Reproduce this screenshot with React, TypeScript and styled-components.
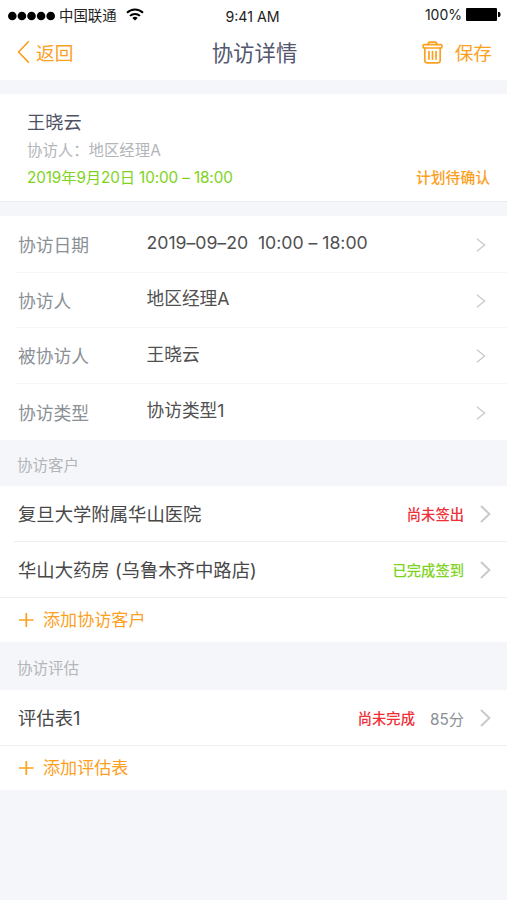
import React from "react";
import styled, { createGlobalStyle } from "styled-components";

const GlobalStyle = createGlobalStyle`
  * { box-sizing: border-box; }
  body {
    margin: 0;
    background: #f4f6fa;
    font-family: Inter, "Noto Sans CJK SC", sans-serif;
  }
`;

const ORANGE = "#fba01f";
const RED = "#ee2f38";
const GREEN = "#7ed321";

const Screen = styled.main`
  width: 507px;
  height: 900px;
  overflow: hidden;
  background: #f4f6fa;
  white-space: pre;
`;

const StatusBar = styled.div`
  height: 30px;
  display: grid;
  grid-template-columns: 1fr auto 1fr;
  align-items: center;
  padding: 0 6px 0 8px;
  background: #fff;
  color: #222;
`;

const Carrier = styled.div`
  display: flex;
  align-items: center;
  font-size: 14.4px;
  line-height: 28px;
  padding-top: 1px;
  svg:first-child { margin-right: 4px; }
  svg:last-child { margin: 0 0 3px 9px; }
`;

const Clock = styled.div`
  font-size: 14.2px;
  line-height: 20px;
  padding: 3px 4px 0 0;
`;

const Battery = styled.div`
  display: flex;
  justify-content: flex-end;
  align-items: center;
  gap: 4px;
  font-size: 14px;
  line-height: 28px;
  padding-bottom: 1px;
`;

const NavBar = styled.header`
  height: 50px;
  display: grid;
  grid-template-columns: 1fr auto 1fr;
  align-items: center;
  padding: 0 15px 6px 17px;
  background: #fff;
`;

const NavAction = styled.div<{ $end?: boolean }>`
  display: flex;
  align-items: center;
  justify-content: ${(p) => (p.$end ? "flex-end" : "flex-start")};
  gap: ${(p) => (p.$end ? "12px" : "6px")};
  color: ${ORANGE};
  font-size: 18.7px;
  line-height: 40px;
  span { padding-top: 3px; }
`;

const Title = styled.h1`
  margin: 0;
  font-size: 21.4px;
  line-height: 42px;
  padding-top: 1px;
  font-weight: 400;
  color: #535670;
`;

const Summary = styled.section`
  height: 108px;
  margin: 14px 0;
  padding: 14px 17px 0 27px;
  background: #fff;
  border-bottom: 1px solid #ebecef;
`;

const PersonName = styled.div`
  font-size: 18.2px;
  line-height: 28px;
  color: #4e5264;
`;

const Visitor = styled.div`
  font-size: 15.4px;
  line-height: 28px;
  padding-top: 1px;
  color: #b3b5b9;
`;

const SummaryFooter = styled.div`
  display: flex;
  justify-content: space-between;
  align-items: center;
  line-height: 26px;
`;

const Schedule = styled.span`
  font-size: 15.3px;
  letter-spacing: -0.12px;
  color: ${GREEN};
`;

const Status = styled.span<{ $color: string; $size?: number }>`
  font-size: ${(p) => p.$size ?? 14.3}px;
  font-weight: 500;
  color: ${(p) => p.$color};
`;

const List = styled.section`
  background: #fff;
`;

const Field = styled.div<{ $height: number; $last?: boolean }>`
  height: ${(p) => p.$height}px;
  margin-left: 15px;
  padding: 2px 21px 0 3px;
  display: grid;
  grid-template-columns: 128.5px 1fr auto;
  align-items: center;
  border-bottom: ${(p) => (p.$last ? "0" : "1px solid #f4f5f6")};
  svg { margin-bottom: 1px; }
`;

const FieldLabel = styled.span`
  font-size: 17.8px;
  line-height: 28px;
  padding-top: 1px;
  color: #8b9096;
`;

const FieldValue = styled.span<{ $spacing?: number }>`
  font-size: 17.7px;
  line-height: 28px;
  letter-spacing: ${(p) => p.$spacing ?? 0}px;
  padding-bottom: 4px;
  color: #505050;
`;

const SectionHeading = styled.h2<{ $height: number }>`
  margin: 0;
  height: ${(p) => p.$height}px;
  padding: 1px 17px 0;
  display: flex;
  align-items: center;
  font-size: 15.5px;
  font-weight: 400;
  color: #b3b5b9;
`;

const Entry = styled.div<{ $inset?: boolean }>`
  height: 56px;
  margin-left: ${(p) => (p.$inset ? 14 : 0)}px;
  padding: 0 16px 0 ${(p) => (p.$inset ? 4 : 18)}px;
  display: flex;
  align-items: center;
  border-bottom: 1px solid #eeeff1;
`;

const EntryName = styled.span`
  flex: 1;
  font-size: 18.35px;
  line-height: 28px;
  color: #484848;
`;

const Score = styled.span`
  margin-left: 15px;
  font-size: 15.3px;
  color: #8b9096;
`;

const EntryArrow = styled.span`
  display: flex;
  margin-left: 16px;
`;

const AddButton = styled.div`
  height: 44px;
  padding: 0 19px 1px;
  display: flex;
  align-items: center;
  gap: 9px;
  font-size: 17.1px;
  color: ${ORANGE};
  span { padding-bottom: 2px; }
`;

const SignalDots = () => (
  <svg width="47" height="10" viewBox="0 0 47 10" fill="#000">
    {[4.3, 13.9, 23.5, 33.1, 42.7].map((x) => (
      <circle key={x} cx={x} cy="5" r="4.3" />
    ))}
  </svg>
);

const WifiIcon = () => (
  <svg width="18" height="13" viewBox="0 0 18 13" fill="none" stroke="#000" strokeWidth="2">
    <path d="M1 4.7a11.5 11.5 0 0 1 16 0M4 7.9a7.2 7.2 0 0 1 10 0" />
    <path d="M9 12.6 6.3 10a4 4 0 0 1 5.4 0z" fill="#000" stroke="none" />
  </svg>
);

const BatteryIcon = () => (
  <svg width="35" height="13" viewBox="0 0 35 13" fill="#000">
    <rect width="31" height="13" rx="1" />
    <path d="M32 4h1c2 0 2 5 0 5h-1z" />
  </svg>
);

const BackIcon = () => (
  <svg width="13" height="24" viewBox="0 0 13 24" fill="none" stroke={ORANGE} strokeWidth="1.6">
    <path d="M11.8 1.2 1.6 12l10.2 10.6" />
  </svg>
);

const TrashIcon = () => (
  <svg width="21" height="23" viewBox="0 0 21 23" fill="none" stroke={ORANGE} strokeWidth="1.7" strokeLinejoin="round" strokeLinecap="round">
    <path d="M6 3.6q.4-2.4 2-2.4h5q1.6 0 2 2.4" />
    <rect x="1.1" y="3.6" width="18.8" height="3.4" rx="1" />
    <path d="M2.8 7v12.6q0 2.2 2.2 2.2h11q2.2 0 2.2-2.2V7M7 10.5v7.6M10.5 10.5v7.6M14 10.5v7.6" />
  </svg>
);

const ThinChevron = () => (
  <svg width="10" height="14" viewBox="0 0 10 14" fill="none" stroke="#c9c9cc" strokeWidth="1.3">
    <path d="M1 .8 8.6 7 1 13.2" />
  </svg>
);

const BoldChevron = () => (
  <svg width="11" height="18" viewBox="0 0 11 18" fill="none" stroke="#c9c9cc" strokeWidth="2">
    <path d="m1 1 8.4 8L1 17" />
  </svg>
);

const PlusIcon = () => (
  <svg width="15" height="16" viewBox="0 0 15 16" stroke={ORANGE} strokeWidth="1.7">
    <path d="M0 8h14.5M7.3 1v14" />
  </svg>
);

const fields = [
  { label: "协访日期", value: "2019–09–20  10:00 – 18:00", height: 57, spacing: -0.03 },
  { label: "协访人", value: "地区经理A", height: 55 },
  { label: "被协访人", value: "王晓云", height: 56 },
  { label: "协访类型", value: "协访类型1", height: 56 },
];

export default function App() {
  return (
    <>
      <GlobalStyle />
      <Screen>
        <StatusBar>
          <Carrier>
            <SignalDots />
            <span>中国联通</span>
            <WifiIcon />
          </Carrier>
          <Clock>9:41 AM</Clock>
          <Battery>
            <span>100%</span>
            <BatteryIcon />
          </Battery>
        </StatusBar>
        <NavBar>
          <NavAction>
            <BackIcon />
            <span>返回</span>
          </NavAction>
          <Title>协访详情</Title>
          <NavAction $end>
            <TrashIcon />
            <span>保存</span>
          </NavAction>
        </NavBar>
        <Summary>
          <PersonName>王晓云</PersonName>
          <Visitor>协访人：地区经理A</Visitor>
          <SummaryFooter>
            <Schedule>2019年9月20日 10:00 – 18:00</Schedule>
            <Status $color={ORANGE} $size={14.8}>计划待确认</Status>
          </SummaryFooter>
        </Summary>
        <List>
          {fields.map((f, i) => (
            <Field key={f.label} $height={f.height} $last={i === fields.length - 1}>
              <FieldLabel>{f.label}</FieldLabel>
              <FieldValue $spacing={f.spacing}>{f.value}</FieldValue>
              <ThinChevron />
            </Field>
          ))}
        </List>
        <SectionHeading $height={46}>协访客户</SectionHeading>
        <List>
          <Entry $inset>
            <EntryName>复旦大学附属华山医院</EntryName>
            <Status $color={RED}>尚未签出</Status>
            <EntryArrow><BoldChevron /></EntryArrow>
          </Entry>
          <Entry>
            <EntryName>华山大药房 (乌鲁木齐中路店)</EntryName>
            <Status $color={GREEN}>已完成签到</Status>
            <EntryArrow><BoldChevron /></EntryArrow>
          </Entry>
          <AddButton>
            <PlusIcon />
            <span>添加协访客户</span>
          </AddButton>
        </List>
        <SectionHeading $height={48}>协访评估</SectionHeading>
        <List>
          <Entry>
            <EntryName>评估表1</EntryName>
            <Status $color={RED}>尚未完成</Status>
            <Score>85分</Score>
            <EntryArrow><BoldChevron /></EntryArrow>
          </Entry>
          <AddButton>
            <PlusIcon />
            <span>添加评估表</span>
          </AddButton>
        </List>
      </Screen>
    </>
  );
}
